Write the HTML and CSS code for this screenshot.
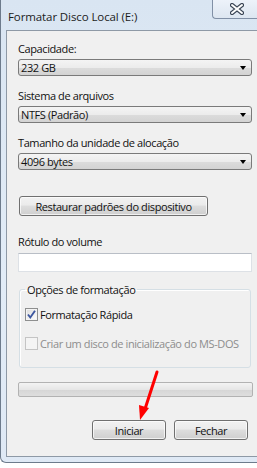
FILE: index.html
```html
<!DOCTYPE html>
<html lang="pt">
<head>
<meta charset="utf-8">
<link rel="stylesheet" href="styles.css">
</head>
<body>
<div class="window">
  <div class="titlebar">
    <span class="title">Formatar Disco Local (E:)</span>
    <div class="close">
      <svg width="14" height="12" viewBox="0 0 14 12">
        <path d="M2 2 L12 10 M12 2 L2 10" stroke="#3b4656" stroke-width="4.2" stroke-linecap="round"/>
        <path d="M2 2 L12 10 M12 2 L2 10" stroke="#ffffff" stroke-width="2" stroke-linecap="round"/>
      </svg>
    </div>
  </div>
  <div class="client">
    <div class="label first">Capacidade:</div>
    <div class="combo"><span>232 GB</span><i class="caret"></i></div>
    <div class="label">Sistema de arquivos</div>
    <div class="combo"><span>NTFS (Padrão)</span><i class="caret"></i></div>
    <div class="label">Tamanho da unidade de alocação</div>
    <div class="combo"><span>4096 bytes</span><i class="caret"></i></div>
    <div class="btn restore">Restaurar padrões do dispositivo</div>
    <div class="label vol">Rótulo do volume</div>
    <div class="textbox"></div>
    <fieldset class="group">
      <legend>Opções de formatação</legend>
      <div class="check row1">
        <span class="box checked">
          <svg width="11" height="11" viewBox="0 0 11 11"><path d="M2 5.5 L4.3 8.5 L9 1.8" fill="none" stroke="#3d57a0" stroke-width="1.9"/></svg>
        </span>
        <span>Formatação Rápida</span>
      </div>
      <div class="check row2 disabled">
        <span class="box"></span>
        <span>Criar um disco de inicialização do MS-DOS</span>
      </div>
    </fieldset>
    <div class="progress"></div>
    <div class="buttons">
      <div class="btn action">Iniciar</div>
      <div class="btn action">Fechar</div>
    </div>
  </div>
</div>
<svg class="arrow" width="40" height="60" viewBox="0 0 40 60">
  <path d="M27 7 L15 44" stroke="#f00" stroke-width="3" stroke-linecap="round"/>
  <path d="M9 40 L19 43 L10 55 Z" fill="#f00"/>
</svg>
</body>
</html>
```
FILE: styles.css
```css
html, body {
  margin: 0;
  padding: 0;
}
body {
  width: 257px;
  height: 468px;
  overflow: hidden;
  background: #ffffff;
  position: relative;
  font-family: "Open Sans", "Noto Sans", sans-serif;
  font-size: 11px;
  letter-spacing: -0.4px;
  color: #111;
}
.window {
  box-sizing: border-box;
  width: 257px;
  height: 463px;
  background: linear-gradient(#d9e5f2, #e2ecf7 60%, #dfe9f5);
  border-left: 1px solid #6d7b8c;
  border-bottom: 1px solid #6d7b8c;
  border-radius: 0 0 0 6px;
  display: flex;
  flex-direction: column;
}
.titlebar {
  height: 30px;
  display: flex;
  align-items: flex-start;
}
.title {
  flex: 1;
  padding: 9px 0 0 7px;
  font-size: 11.5px;
  letter-spacing: -0.1px;
  line-height: 15px;
  color: #1b1b1b;
}
.close {
  width: 45px;
  height: 20px;
  margin-top: -1px;
  box-sizing: border-box;
  border: 1px solid #8190a6;
  border-top: none;
  border-right: none;
  border-radius: 0 0 0 4px;
  background: linear-gradient(#eef3fa, #dde6f1);
  display: flex;
  justify-content: flex-start;
  align-items: center;
  padding-left: 17px;
}
.close svg { display: block; }
.client {
  flex: 1;
  margin: 0 0 5px 5px;
  border: 1px solid #8e99a6;
  border-right: none;
  background: #f0f0f0;
  padding: 0 0 0 11px;
  display: flex;
  flex-direction: column;
  align-items: flex-start;
}
.label {
  line-height: 15px;
  height: 15px;
  margin-top: 12px;
  white-space: nowrap;
}
.label.first { margin-top: 10px; }
.label.vol { margin-top: 18px; }
.combo {
  box-sizing: border-box;
  width: 234px;
  height: 17px;
  margin-top: 3px;
  border: 1px solid #7a7a7a;
  border-radius: 3px;
  background: linear-gradient(#f4f4f4, #ececec 50%, #dcdcdc 51%, #d3d3d3);
  display: flex;
  align-items: center;
  padding: 0 0 0 2px;
  line-height: 15px;
}
.combo span { flex: 1; }
.caret {
  width: 0;
  height: 0;
  border-left: 3.5px solid transparent;
  border-right: 3.5px solid transparent;
  border-top: 4px solid #000;
  margin-right: 5px;
}
.btn {
  box-sizing: border-box;
  height: 20px;
  border: 1px solid #707070;
  border-radius: 3px;
  background: linear-gradient(#f2f2f2, #ebebeb 45%, #dddddd 50%, #cfcfcf);
  box-shadow: inset 0 0 0 1px rgba(255,255,255,0.7);
  display: flex;
  align-items: center;
  justify-content: center;
  line-height: 15px;
  white-space: nowrap;
}
.restore {
  width: 189px;
  margin: 26px 0 0 1px;
}
.textbox {
  box-sizing: border-box;
  width: 234px;
  height: 19px;
  margin-top: 4px;
  background: #fff;
  border: 1px solid #dde1e6;
  border-top-color: #b9bec6;
}
.group {
  box-sizing: border-box;
  width: 232px;
  margin: 10px 0 0 1px;
  padding: 0 5px 16px 5px;
  border: 1px solid #d5dfe5;
  border-radius: 3px;
  box-shadow: inset 1px 1px 0 #fff;
}
.group legend {
  padding: 0 2px;
  line-height: 15px;
}
.check {
  display: flex;
  align-items: center;
  height: 15px;
  white-space: nowrap;
}
.row1 { margin-top: 10px; }
.row2 { margin-top: 14px; }
.box {
  box-sizing: border-box;
  width: 13px;
  height: 13px;
  border: 1px solid #8e8f8f;
  background: linear-gradient(135deg, #dcdcdc, #ffffff);
  box-shadow: inset 0 0 0 1px #f4f4f4;
  margin-right: 2px;
  display: flex;
  align-items: center;
  justify-content: center;
}
.disabled { color: #8d8d8d; }
.disabled .box {
  border-color: #c4c4c4;
  background: #f4f4f4;
}
.progress {
  box-sizing: border-box;
  width: 235px;
  height: 15px;
  margin-top: 14px;
  border: 1px solid #b2b2b2;
  border-radius: 2px;
  background: linear-gradient(#f3f3f3, #e6e6e6 50%, #d6d6d6 55%, #dedede);
}
.buttons {
  display: flex;
  gap: 8px;
  margin: 23px 0 0 74px;
}
.action { width: 74px; }
.arrow {
  position: absolute;
  left: 130px;
  top: 365px;
}
```
